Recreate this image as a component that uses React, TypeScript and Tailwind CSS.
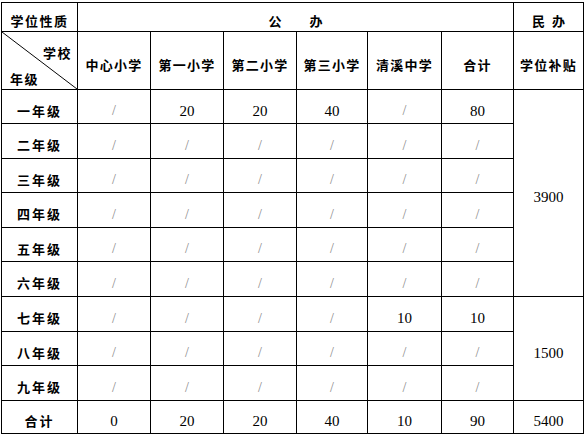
import React from "react";

const cjk = { fontFamily: '"Noto Sans CJK SC", "Noto Sans", sans-serif' };
const serif = { fontFamily: '"Liberation Serif", "Times New Roman", serif' };

const schools = ["中心小学", "第一小学", "第二小学", "第三小学", "清溪中学", "合计"];
const rows: { label: string; vals: string[] }[] = [
  { label: "一年级", vals: ["/", "20", "20", "40", "/", "80"] },
  { label: "二年级", vals: ["/", "/", "/", "/", "/", "/"] },
  { label: "三年级", vals: ["/", "/", "/", "/", "/", "/"] },
  { label: "四年级", vals: ["/", "/", "/", "/", "/", "/"] },
  { label: "五年级", vals: ["/", "/", "/", "/", "/", "/"] },
  { label: "六年级", vals: ["/", "/", "/", "/", "/", "/"] },
  { label: "七年级", vals: ["/", "/", "/", "/", "10", "10"] },
  { label: "八年级", vals: ["/", "/", "/", "/", "/", "/"] },
  { label: "九年级", vals: ["/", "/", "/", "/", "/", "/"] },
];
const heights = [34, 35, 34, 35, 34, 35, 35, 34, 35];

function Val({ v }: { v: string }) {
  if (v === "/")
    return (
      <span className="text-[14px] text-[#8a8a8a]" style={serif}>
        /
      </span>
    );
  return (
    <span className="text-[15px] text-black" style={serif}>
      {v}
    </span>
  );
}

export default function App() {
  const td = "border border-black text-center align-middle p-0 pt-[7px] leading-[18px]";
  return (
    <div className="bg-white w-[586px] h-[435px] overflow-hidden pt-[2px] pl-px">
      <table className="border-collapse table-fixed w-[583px]">
        <colgroup>
          <col className="w-[76px]" />
          <col className="w-[73px]" />
          <col className="w-[73px]" />
          <col className="w-[73px]" />
          <col className="w-[71px]" />
          <col className="w-[74px]" />
          <col className="w-[72px]" />
          <col className="w-[70px]" />
        </colgroup>
        <tbody>
          <tr className="h-[29px]">
            <td className={td}>
              <span className="text-[13px] font-bold tracking-[1.5px] text-black" style={cjk}>
                学位性质
              </span>
            </td>
            <td className={td} colSpan={6}>
              <div className="flex justify-center gap-[28px] text-[13px] font-bold text-black" style={cjk}>
                <span>公</span>
                <span>办</span>
              </div>
            </td>
            <td className={td}>
              <div className="flex justify-center gap-[7px] text-[13px] font-bold text-black" style={cjk}>
                <span>民</span>
                <span>办</span>
              </div>
            </td>
          </tr>
          <tr className="h-[58px]">
            <td className="border border-black p-0 relative">
              <svg className="absolute inset-0 w-full h-full" preserveAspectRatio="none" viewBox="0 0 76 58">
                <line x1="0" y1="0" x2="76" y2="58" stroke="black" strokeWidth="1" />
              </svg>
              <div className="relative h-[54px] text-[13px] leading-[18px] font-bold tracking-[1.5px] text-black" style={cjk}>
                <span className="absolute right-[5px] top-[10px]">学校</span>
                <span className="absolute left-[8px] bottom-[0px]">年级</span>
              </div>
            </td>
            {schools.map((s) => (
              <td key={s} className={td}>
                <span className="text-[13px] font-bold tracking-[1.3px] text-black" style={cjk}>
                  {s}
                </span>
              </td>
            ))}
            <td className={td}>
              <span className="text-[13px] font-bold tracking-[1.3px] text-black" style={cjk}>
                学位补贴
              </span>
            </td>
          </tr>
          {rows.map((r, i) => (
            <tr key={r.label} style={{ height: heights[i] }}>
              <td className={td}>
                <span className="text-[13px] font-bold tracking-[2px] text-black" style={cjk}>
                  {r.label}
                </span>
              </td>
              {r.vals.map((v, j) => (
                <td key={j} className={td}>
                  <Val v={v} />
                </td>
              ))}
              {i === 0 && (
                <td className={td} rowSpan={6}>
                  <Val v="3900" />
                </td>
              )}
              {i === 6 && (
                <td className={td} rowSpan={3}>
                  <Val v="1500" />
                </td>
              )}
            </tr>
          ))}
          <tr className="h-[33px]">
            <td className={td}>
              <span className="text-[13px] font-bold tracking-[2px] text-black" style={cjk}>
                合计
              </span>
            </td>
            {["0", "20", "20", "40", "10", "90", "5400"].map((v, j) => (
              <td key={j} className={td}>
                <Val v={v} />
              </td>
            ))}
          </tr>
        </tbody>
      </table>
    </div>
  );
}
